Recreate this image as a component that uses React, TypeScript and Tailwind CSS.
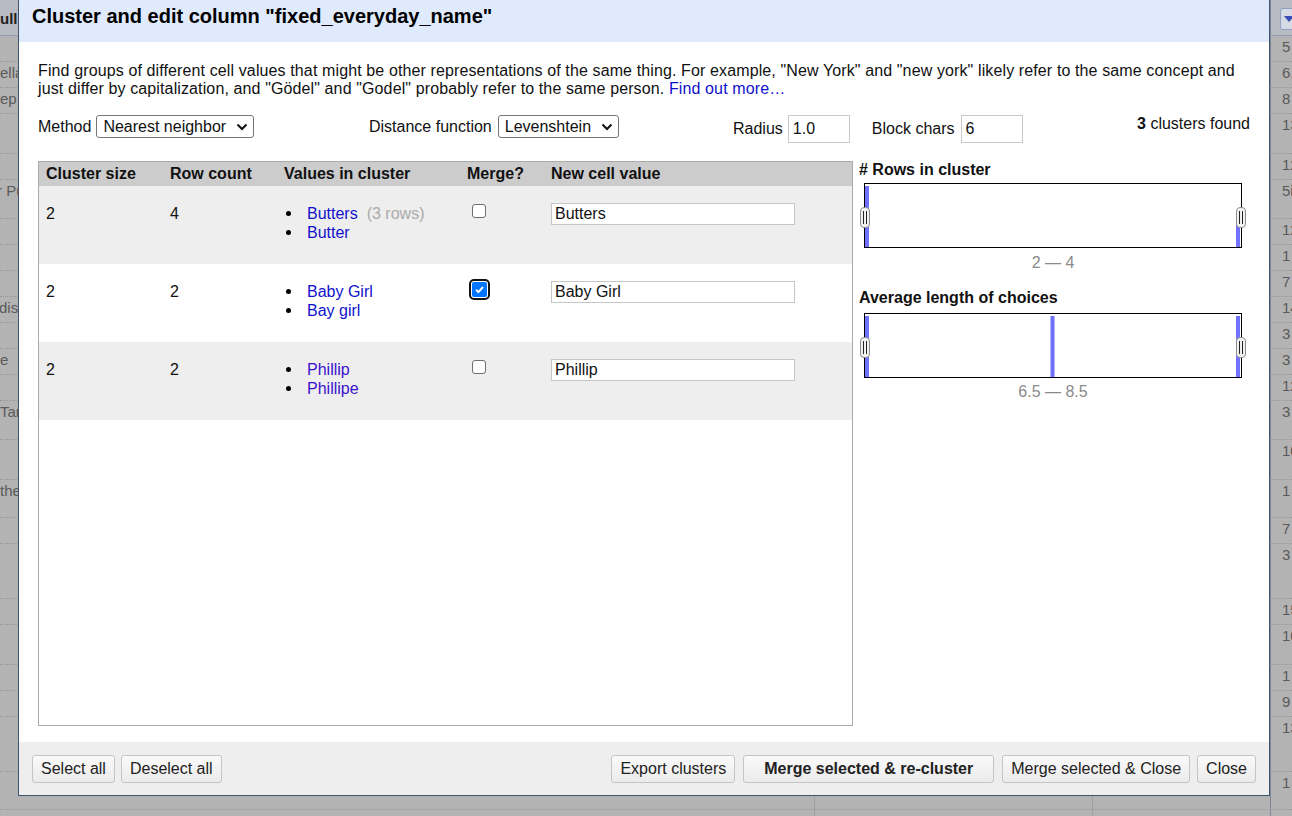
import React from 'react'

type BgRow = { h: number; l?: string; lo?: number; r: string }

const bgRows: BgRow[] = [
  { h: 26, r: '5' },
  { h: 26, l: 'ella', r: '6.' },
  { h: 26, l: 'ep', r: '8' },
  { h: 40, r: '13' },
  { h: 26, r: '12' },
  { h: 39, l: 'r Pu', lo: 3, r: '5i' },
  { h: 26, r: '12' },
  { h: 26, r: '1' },
  { h: 26, r: '7' },
  { h: 26, l: 'dish', lo: 1, r: '14' },
  { h: 26, r: '3' },
  { h: 26, l: 'e', r: '3' },
  { h: 26, r: '12' },
  { h: 39, l: 'Tar', r: '3' },
  { h: 40, r: '10' },
  { h: 38, l: 'the', r: '1' },
  { h: 26, r: '7' },
  { h: 55, r: '3' },
  { h: 26, r: '15' },
  { h: 40, r: '10' },
  { h: 26, r: '1' },
  { h: 26, r: '9' },
  { h: 55, r: '13' },
  { h: 38, r: '1' },
  { h: 26, r: '' },
]

const clusters = [
  { size: 2, rows: 4, values: [{ v: 'Butters', n: '(3 rows)' }, { v: 'Butter' }], checked: false, newVal: 'Butters', violet: false },
  { size: 2, rows: 2, values: [{ v: 'Baby Girl' }, { v: 'Bay girl' }], checked: true, newVal: 'Baby Girl', violet: false },
  { size: 2, rows: 2, values: [{ v: 'Phillip' }, { v: 'Phillipe' }], checked: false, newVal: 'Phillip', violet: true },
]

function Chevron() {
  return (
    <svg width="12" height="8" viewBox="0 0 12 8" className="shrink-0">
      <path d="M1.5 1.5 L6 6 L10.5 1.5" fill="none" stroke="#111" strokeWidth="2" />
    </svg>
  )
}

function FakeSelect({ value }: { value: string }) {
  return (
    <div className="h-[23px] flex items-center gap-[10px] border border-[#767676] rounded-[3px] bg-white pl-[6px] pr-[5px]">
      <span>{value}</span>
      <Chevron />
    </div>
  )
}

function TextBox({ value }: { value: string }) {
  return (
    <div className="h-[28px] w-[62px] border border-[#c9c9c9] bg-white pl-[4px] flex items-center">{value}</div>
  )
}

function Handle({ className }: { className: string }) {
  return (
    <svg width="10" height="21" viewBox="0 0 10 21" className={className}>
      <rect x="0.5" y="0.5" width="9" height="20" rx="3.5" fill="#f2f2f2" stroke="#8c8c8c" />
      <line x1="3.5" y1="4" x2="3.5" y2="17" stroke="#222" />
      <line x1="6.5" y1="4" x2="6.5" y2="17" stroke="#222" />
    </svg>
  )
}

function Histogram({ bars, label, labelGap }: { bars: { x: number; h: number }[]; label: string; labelGap: string }) {
  return (
    <div className="ml-[5px] w-[378px]">
      <div className="relative h-[65px] border border-black bg-white">
        <svg width="376" height="63" viewBox="0 0 376 63" className="block">
          {bars.map((b, i) => (
            <rect key={i} x={b.x} y={63 - b.h} width="4" height={b.h} fill="#7171ff" />
          ))}
        </svg>
        <Handle className="absolute left-[-5px] top-[23px]" />
        <Handle className="absolute right-[-5px] top-[23px]" />
      </div>
      <div className={`text-center text-[#8a8a8a] ${labelGap}`}>{label}</div>
    </div>
  )
}

function Btn({ children, bold }: { children: React.ReactNode; bold?: boolean }) {
  return (
    <button
      className={`h-[28px] border border-[#c5c5c5] rounded-[3px] bg-linear-to-b from-[#fafafa] to-[#ebebeb] text-[#222] leading-none whitespace-nowrap ${
        bold ? 'px-[20px] font-bold' : 'px-[8px]'
      }`}
    >
      {children}
    </button>
  )
}

function Checkbox({ checked }: { checked: boolean }) {
  if (checked) {
    return (
      <div className="ml-[9px] mt-[15px] w-[21px] h-[21px] border-2 border-[#111] rounded-[5px] bg-white p-px">
        <div className="w-[15px] h-[15px] rounded-[2px] bg-[#0075ff] flex items-center justify-center">
          <svg width="11" height="11" viewBox="0 0 11 11">
            <path d="M2 5.8 L4.4 8.1 L9 3" fill="none" stroke="#fff" strokeWidth="1.9" />
          </svg>
        </div>
      </div>
    )
  }
  return <div className="ml-[12px] mt-[18px] w-[14px] h-[14px] border border-[#6f6f6f] rounded-[3px] bg-white" />
}

export default function App() {
  return (
    <div className="relative w-[1292px] h-[816px] overflow-hidden bg-[#b3b3b3] font-['Liberation_Sans',Arial,sans-serif] text-[16px] leading-[1.15] text-[#111]">
      {/* page behind the dialog */}
      <div className="absolute inset-0 flex flex-col">
        <div className="h-[36px] shrink-0 flex bg-[#b8bbc4] border-b border-[#8f9bb0]">
          <div className="w-[18px] overflow-hidden whitespace-nowrap font-bold text-[15px] text-[#222] pt-[10px]">ull</div>
          <div className="flex-1" />
          <div className="w-[22px] border-l border-[#7f8796] pl-[9px] pt-[8px]">
            <div className="h-[22px] w-[20px] border border-[#8fa0c0] rounded-[3px] bg-[#d6dae4] flex items-center pl-[3px]">
              <svg width="10" height="6" viewBox="0 0 10 6">
                <path d="M0 0 L10 0 L5 6 Z" fill="#3a4db5" />
              </svg>
            </div>
          </div>
        </div>
        {bgRows.map((r, i) => (
          <div key={i} style={{ height: r.h }} className="shrink-0 flex border-b border-dotted border-[#979797] text-[15px] text-[#5a5a5a]">
            <div className="w-[18px] overflow-hidden whitespace-nowrap pt-[2px]">
              {r.l && <span className={r.lo === 3 ? 'ml-[-3px]' : r.lo === 1 ? 'ml-[-1px]' : ''}>{r.l}</span>}
            </div>
            <div className="w-[797px] border-r border-[#a0a0a0]" />
            <div className="w-[278px] border-r border-[#a0a0a0]" />
            <div className="flex-1 border-r border-[#7f8796]" />
            <div className="w-[21px] pl-[11px] pt-[2px] whitespace-nowrap overflow-hidden">{r.r}</div>
          </div>
        ))}
      </div>

      {/* dialog */}
      <div className="absolute left-[18px] top-0 w-[1252px] h-[796px] border-x border-b border-[#3e5470] bg-white flex flex-col">
        <div className="h-[42px] shrink-0 bg-[#dfeafc] pl-[13px] pt-[5px] text-[20px] font-bold text-black">
          Cluster and edit column "fixed_everyday_name"
        </div>

        <div className="flex-1 px-[19px] pt-[20px]">
          <p className="leading-[18.4px] tracking-[0.12px]">
            Find groups of different cell values that might be other representations of the same thing. For example, "New York" and
            "new york" likely refer to the same concept and just differ by capitalization, and "Gödel" and "Godel" probably refer to
            the same person. <span className="text-[#1111cc]">Find out more…</span>
          </p>

          <div className="mt-[16px] h-[28px] flex items-start">
            <div className="w-[331px] h-[24px] flex items-center gap-[5px]">
              <span>Method</span>
              <FakeSelect value="Nearest neighbor" />
            </div>
            <div className="w-[364px] h-[24px] flex items-center gap-[6px]">
              <span>Distance function</span>
              <FakeSelect value="Levenshtein" />
            </div>
            <div className="h-[28px] flex items-center gap-[5px]">
              <span>Radius</span>
              <TextBox value="1.0" />
            </div>
            <div className="ml-[22px] h-[28px] flex items-center gap-[6px]">
              <span>Block chars</span>
              <TextBox value="6" />
            </div>
            <div className="ml-auto leading-[18.4px]">
              <b>3</b> clusters found
            </div>
          </div>

          <div className="mt-[18px] flex items-start">
            <div className="w-[815px] h-[565px] border border-[#aaaaaa] bg-white">
              <div className="h-[24px] bg-[#cccccc] flex items-center font-bold">
                <div className="w-[124px] pl-[7px]">Cluster size</div>
                <div className="w-[114px] pl-[7px]">Row count</div>
                <div className="w-[183px] pl-[7px]">Values in cluster</div>
                <div className="w-[84px] pl-[7px]">Merge?</div>
                <div className="flex-1 pl-[7px]">New cell value</div>
              </div>
              {clusters.map((c, i) => (
                <div key={i} className={`h-[78px] flex leading-[19px] ${i % 2 === 0 ? 'bg-[#eeeeee]' : 'bg-white'}`}>
                  <div className="w-[124px] pl-[7px] pt-[18px]">{c.size}</div>
                  <div className="w-[114px] pl-[7px] pt-[18px]">{c.rows}</div>
                  <div className="w-[183px] pl-[7px] pt-[18px]">
                    {c.values.map((v, j) => (
                      <div key={j} className="flex items-center">
                        <span className="w-[23px] flex items-center">
                          <span className="ml-[2px] w-[5px] h-[5px] rounded-full bg-black" />
                        </span>
                        <span className={c.violet ? 'text-[#3a12cf]' : 'text-[#1111cc]'}>{v.v}</span>
                        {v.n && <span className="ml-[9px] text-[#aaaaaa]">{v.n}</span>}
                      </div>
                    ))}
                  </div>
                  <div className="w-[84px]">
                    <Checkbox checked={c.checked} />
                  </div>
                  <div className="flex-1 pl-[7px] pt-[17px]">
                    <div className="w-[244px] h-[22px] border border-[#c6c6c6] bg-white pl-[3px] leading-[19px]">{c.newVal}</div>
                  </div>
                </div>
              ))}
            </div>

            <div className="ml-[6px] flex-1">
              <div className="font-bold leading-[18.4px]"># Rows in cluster</div>
              <div className="mt-[4px]">
                <Histogram
                  bars={[
                    { x: 0, h: 61 },
                    { x: 371, h: 30 },
                  ]}
                  label="2 — 4"
                  labelGap="mt-[6px]"
                />
              </div>
              <div className="mt-[16.5px] font-bold leading-[18.4px]">Average length of choices</div>
              <div className="mt-[5.5px]">
                <Histogram
                  bars={[
                    { x: 0, h: 61 },
                    { x: 185.5, h: 61 },
                    { x: 371, h: 61 },
                  ]}
                  label="6.5 — 8.5"
                  labelGap="mt-[4.5px]"
                />
              </div>
            </div>
          </div>
        </div>

        <div className="h-[53px] shrink-0 bg-[#eeeeee] flex items-center px-[13px]">
          <Btn>Select all</Btn>
          <div className="ml-[6px]">
            <Btn>Deselect all</Btn>
          </div>
          <div className="ml-auto flex items-center">
            <Btn>Export clusters</Btn>
            <div className="ml-[8px]">
              <Btn bold>Merge selected &amp; re-cluster</Btn>
            </div>
            <div className="ml-[8px]">
              <Btn>Merge selected &amp; Close</Btn>
            </div>
            <div className="ml-[7px]">
              <Btn>Close</Btn>
            </div>
          </div>
        </div>
      </div>
    </div>
  )
}
